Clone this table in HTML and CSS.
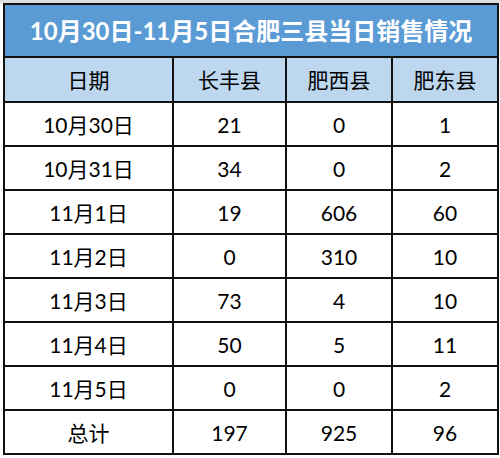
FILE: index.html
```html
<!DOCTYPE html>
<html lang="zh-CN">
<head>
<meta charset="utf-8">
<link rel="stylesheet" href="styles.css">
</head>
<body>
<div class="sheet">
<table class="sales">
  <colgroup>
    <col class="c1"><col class="c2"><col class="c3"><col class="c4">
  </colgroup>
  <thead>
    <tr class="title"><th colspan="4">10月30日-11月5日合肥三县当日销售情况</th></tr>
    <tr class="head"><th>日期</th><th>长丰县</th><th>肥西县</th><th>肥东县</th></tr>
  </thead>
  <tbody>
    <tr><td>10月30日</td><td>21</td><td>0</td><td>1</td></tr>
    <tr><td>10月31日</td><td>34</td><td>0</td><td>2</td></tr>
    <tr><td>11月1日</td><td>19</td><td>606</td><td>60</td></tr>
    <tr><td>11月2日</td><td>0</td><td>310</td><td>10</td></tr>
    <tr><td>11月3日</td><td>73</td><td>4</td><td>10</td></tr>
    <tr><td>11月4日</td><td>50</td><td>5</td><td>11</td></tr>
    <tr><td>11月5日</td><td>0</td><td>0</td><td>2</td></tr>
    <tr><td>总计</td><td>197</td><td>925</td><td>96</td></tr>
  </tbody>
</table>
</div>
</body>
</html>
```
FILE: styles.css
```css
html, body {
  margin: 0;
  padding: 0;
  background: #ffffff;
}
body {
  font-family: "Lato", "Noto Sans CJK SC", sans-serif;
  color: #000;
}
.sheet {
  padding: 3px 0 0 3px;
  width: 500px;
  height: 458px;
  box-sizing: border-box;
  background: linear-gradient(#dedede, #dedede) 0 0 / 500px 3px no-repeat, #fff;
}
.sales {
  border-collapse: collapse;
  table-layout: fixed;
  width: 494px;
}
.c1 { width: 169px; }
.c2 { width: 113px; }
.c3 { width: 106px; }
.c4 { width: 106px; }
.sales th, .sales td {
  border: 2px solid #111;
  text-align: center;
  padding: 0;
  font-weight: normal;
  font-size: 21px;
  height: 42px;
  line-height: 1;
}
.title th {
  background: #5b9bd5;
  color: #fff;
  font-weight: bold;
  font-size: 24px;
  height: 51px;
}
.head th {
  background: #bdd7ee;
  height: 43px;
}
```
